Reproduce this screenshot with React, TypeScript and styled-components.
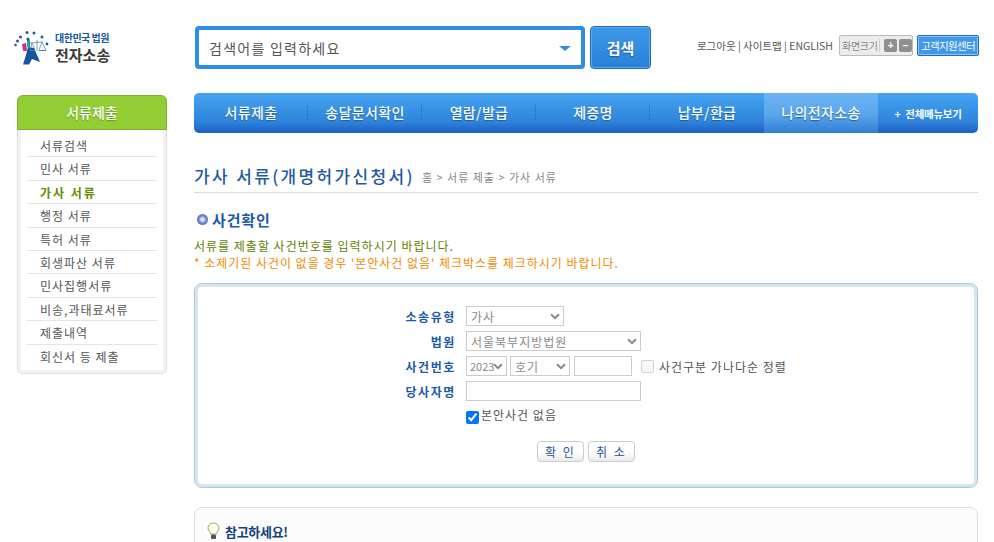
import React from "react";
import styled, { createGlobalStyle } from "styled-components";

const Global = createGlobalStyle`
  html, body { margin: 0; padding: 0; background: #fff; overflow: hidden; height: 542px; }
  body { font-family: "Noto Sans CJK KR", "Liberation Sans", sans-serif; font-size: 12px; color: #555; }
  * { box-sizing: border-box; }
`;

const chevron =
  "url(\"data:image/svg+xml,%3Csvg xmlns='http://www.w3.org/2000/svg' width='10' height='7' viewBox='0 0 10 7'%3E%3Cpath d='M1 1.2 L5 5.2 L9 1.2' fill='none' stroke='%23888' stroke-width='2'/%3E%3C/svg%3E\")";

const Page = styled.div`
  width: 994px;
  height: 542px;
  overflow: hidden;
`;
const Header = styled.header`
  height: 93px;
  display: flex;
  align-items: flex-start;
  padding: 26px 15px 0 14px;
`;
const Logo = styled.div`
  width: 181px;
  display: flex;
  align-items: center;
  gap: 4px;
  margin-top: 3px;
`;
const LogoText = styled.div`
  display: flex;
  flex-direction: column;
  gap: 2px;
`;
const LogoTop = styled.span`
  font-size: 10px;
  font-weight: 700;
  line-height: 13px;
  color: #14569f;
  letter-spacing: -0.5px;
`;
const LogoMain = styled.span`
  font-size: 15px;
  font-weight: 700;
  line-height: 18px;
  color: #3a3a3a;
  letter-spacing: 0;
`;
const SearchBox = styled.div`
  width: 390px;
  height: 43px;
  border: 4px solid #2e8ee6;
  border-radius: 4px;
  display: flex;
  align-items: center;
  justify-content: space-between;
  padding: 1px 10px 0 10px;
  font-size: 14px;
  color: #555;
  letter-spacing: 1.25px;
`;
const Caret = styled.span`
  width: 0;
  height: 0;
  border-left: 6px solid transparent;
  border-right: 6px solid transparent;
  border-top: 5px solid #2e8ee6;
`;
const SearchButton = styled.button`
  width: 61px;
  height: 43px;
  margin-left: 5px;
  border: 1px solid #1f6fc0;
  border-radius: 4px;
  background: linear-gradient(#3c98e9, #2a80d8);
  box-shadow: inset 0 0 0 1px #5aa9ee;
  color: #fff;
  font: 700 15px "Noto Sans CJK KR", sans-serif;
  text-shadow: 0 1px 1px #1a5aa0;
  padding: 0;
`;
const Util = styled.div`
  margin-left: auto;
  display: flex;
  align-items: center;
  height: 21px;
  margin-top: 9px;
`;
const UtilLinks = styled.span`
  font-size: 10.5px;
  color: #555;
  letter-spacing: 0;
  white-space: nowrap;
`;
const ZoomBox = styled.div`
  width: 74px;
  height: 21px;
  margin-left: 6px;
  border: 1px solid #bbb;
  border-radius: 2px;
  background: #ececec;
  display: flex;
  align-items: center;
  padding-left: 2px;
  gap: 2px;
  font-size: 10px;
  letter-spacing: -0.3px;
  color: #888;
`;
const ZoomLabel = styled.span`
  width: 38px;
  border-right: 1px solid #ccc;
  line-height: 13px;
  white-space: nowrap;
  margin-right: 2px;
`;
const ZoomBtn = styled.span`
  width: 13px;
  height: 13px;
  border-radius: 2px;
  background: #8f8f8f;
  color: #fff;
  font: 700 10px/13px "Liberation Sans", sans-serif;
  text-align: center;
`;
const SupportBtn = styled.a`
  width: 62px;
  height: 21px;
  margin-left: 4px;
  border: 1px solid #1c6cc0;
  border-radius: 2px;
  background: #3f98ea;
  box-shadow: inset 0 0 0 1px #8cc4f2;
  color: #fff;
  font-size: 10.5px;
  letter-spacing: -0.7px;
  line-height: 19px;
  text-align: center;
  white-space: nowrap;
`;
const Columns = styled.div`
  display: flex;
  align-items: flex-start;
  padding-left: 17px;
  gap: 27px;
`;
const Side = styled.aside`
  width: 150px;
  margin-top: 2px;
  border-radius: 6px;
  flex: none;
`;
const SideHead = styled.div`
  height: 35px;
  background: #92cd33;
  border: 1px solid #7fb02e;
  border-radius: 6px 6px 0 0;
  color: #fff;
  font-size: 14px;
  font-weight: 500;
  line-height: 32px;
  text-align: center;
  text-shadow: 0 1px 1px #6a9a20;
  letter-spacing: 0;
`;
const SideBody = styled.ul`
  list-style: none;
  margin: 0;
  height: 244px;
  padding: 4px 9px 0;
  background: #fff;
  border: 1px solid #ddd;
  border-top: 0;
  border-radius: 0 0 5px 5px;
  box-shadow: inset 3px 0 0 #f2f2f2, inset -3px 0 0 #f2f2f2, inset 0 -3px 0 #f2f2f2;
`;
const SideItem = styled.li<{ $active?: boolean }>`
  height: 23.4px;
  padding-left: 13px;
  line-height: 23px;
  border-bottom: 1px solid #e4e4e4;
  font-size: 12px;
  letter-spacing: ${(p) => (p.$active ? "2px" : "1px")};
  color: ${(p) => (p.$active ? "#5f8c00" : "#555")};
  font-weight: ${(p) => (p.$active ? 700 : 400)};
  white-space: nowrap;
  &:last-child { border-bottom: 0; }
`;
const Main = styled.main`
  width: 784px;
  flex: none;
`;
const Nav = styled.nav`
  height: 40px;
  display: flex;
  border-radius: 5px;
  overflow: hidden;
  background: linear-gradient(#46a4f4 0%, #3690e2 45%, #2f84da 72%, #1a5ec6 100%);
`;
const NavItem = styled.a<{ $active?: boolean; $sep?: boolean }>`
  width: 114px;
  flex: none;
  display: flex;
  align-items: center;
  justify-content: center;
  position: relative;
  padding-bottom: 3px;
  color: #fff;
  font-size: 14px;
  font-weight: 500;
  letter-spacing: 0.35px;
  text-shadow: 0 1px 1px #1b5fa8;
  background: ${(p) =>
    p.$active ? "linear-gradient(#6cb4f4 0%, #5ba5ea 55%, #2f7ed6 100%)" : "transparent"};
  &::after {
    content: "";
    display: ${(p) => (p.$sep ? "block" : "none")};
    position: absolute;
    right: 0;
    top: 12px;
    height: 15px;
    border-right: 1px dotted rgba(20, 80, 150, 0.6);
  }
`;
const NavMore = styled.a`
  flex: 1;
  display: flex;
  align-items: center;
  justify-content: center;
  gap: 5px;
  color: #fff;
  font-size: 10.5px;
  font-weight: 700;
  letter-spacing: -0.3px;
`;
const TitleRow = styled.div`
  margin-top: 30px;
  height: 30px;
  display: flex;
  align-items: center;
  border-bottom: 1px solid #ddd;
  padding-bottom: 4px;
`;
const Title = styled.h1`
  margin: 0;
  font-size: 17px;
  font-weight: 500;
  color: #1f5ca6;
  letter-spacing: 2.35px;
  white-space: nowrap;
`;
const Crumb = styled.span`
  margin: 3px 0 0 7px;
  font-size: 11px;
  letter-spacing: 1px;
  color: #888;
  white-space: nowrap;
`;
const Section = styled.div`
  margin-top: 15px;
  margin-left: 3px;
  display: flex;
  align-items: center;
  gap: 4px;
  height: 22px;
`;
const Bullet = styled.span`
  width: 11px;
  height: 11px;
  border-radius: 50%;
  background: radial-gradient(circle at 50% 50%, #dfe7fb 0 20%, #6c86cf 45%, #4a63ad 100%);
`;
const SectionTitle = styled.h2`
  margin: 0;
  font-size: 15px;
  font-weight: 700;
  color: #1d5aa6;
  letter-spacing: 0.85px;
`;
const Note = styled.p<{ $warn?: boolean }>`
  margin: 0;
  height: 17px;
  line-height: 17px;
  font-size: 12px;
  letter-spacing: ${(p) => (p.$warn ? "0.97px" : "1px")};
  white-space: nowrap;
  color: ${(p) => (p.$warn ? "#f28c00" : "#5f7f00")};
`;
const Notes = styled.div`
  margin-top: 7px;
`;
const FormBox = styled.form`
  margin-top: 12px;
  height: 205px;
  border: 1px solid #a9cbe0;
  border-radius: 8px;
  padding: 22px 0 0 202px;
  box-shadow: inset 0 0 0 3px #d7e5ef;
`;
const Row = styled.div`
  display: grid;
  grid-template-columns: 59px 1fr;
  column-gap: 10px;
  height: 25px;
  align-items: start;
`;
const Label = styled.label`
  font-size: 12px;
  font-weight: 700;
  color: #1d5aa6;
  text-align: right;
  line-height: 21px;
  letter-spacing: 1.6px;
  white-space: nowrap;
`;
const Fields = styled.div`
  display: flex;
  align-items: center;
  gap: 3px;
  height: 20px;
`;
const Select = styled.select<{ $w: number; $compact?: boolean }>`
  width: ${(p) => p.$w}px;
  height: 20px;
  border: 1px solid #ccc;
  background: #fff ${chevron} no-repeat right 3px center;
  appearance: none;
  color: #8a8a8a;
  font: ${(p) => (p.$compact ? "11px" : "12px")} "Noto Sans CJK KR", sans-serif;
  letter-spacing: ${(p) => (p.$compact ? "0" : "1px")};
  padding: 0 0 0 ${(p) => (p.$compact ? "3px" : "4px")};
  border-radius: 0;
`;
const Input = styled.input<{ $w: number; $gapLeft?: number }>`
  width: ${(p) => p.$w}px;
  height: 20px;
  border: 1px solid #ccc;
  padding: 0;
  margin: 0 0 0 ${(p) => p.$gapLeft ?? 0}px;
  border-radius: 0;
`;
const CheckLabel = styled.label<{ $gapLeft?: number }>`
  display: flex;
  align-items: center;
  gap: 2px;
  margin-left: ${(p) => p.$gapLeft ?? 0}px;
  font-size: 12px;
  letter-spacing: 1px;
  color: #555;
  white-space: nowrap;
`;
const Check = styled.input<{ $gapRight?: number }>`
  width: 13px;
  height: 13px;
  margin: 0 ${(p) => p.$gapRight ?? 0}px 0 0;
`;
const CheckText = styled.span`
  margin-bottom: 6px;
`;
const NoCaseRow = styled.div`
  padding-left: 69px;
  height: 20px;
  margin-top: 0;
`;
const Buttons = styled.div`
  display: flex;
  gap: 4px;
  margin: 15px 0 0 140px;
`;
const Btn = styled.button`
  width: 47px;
  height: 21px;
  padding: 0;
  border: 1px solid #ccc;
  border-radius: 4px;
  background: linear-gradient(#fff 50%, #ebebeb);
  color: #1f5a96;
  font: 12px "Noto Sans CJK KR", sans-serif;
  letter-spacing: 2px;
`;
const Tip = styled.div`
  margin-top: 19px;
  height: 60px;
  border: 1px solid #ddd;
  border-radius: 8px;
  background: #fcfcfc;
  padding: 14px 0 0 12px;
  display: flex;
  align-items: flex-start;
  gap: 5px;
`;
const TipTitle = styled.strong`
  font-size: 13px;
  font-weight: 700;
  line-height: 20px;
  color: #163f7e;
  letter-spacing: -0.3px;
`;

const menu = ["서류검색", "민사 서류", "가사 서류", "행정 서류", "특허 서류", "회생파산 서류", "민사집행서류", "비송,과태료서류", "제출내역", "회신서 등 제출"];
const navs = ["서류제출", "송달문서확인", "열람/발급", "제증명", "납부/환급", "나의전자소송"];

const LogoMark = () => (
  <svg width="37" height="37" viewBox="0 0 37 37" aria-hidden="true">
    <g fill="#1d5aa6">
      <circle cx="1.5" cy="16" r="1.3" />
      <circle cx="3.5" cy="12" r="1.5" />
      <circle cx="6.5" cy="8" r="1.5" />
      <circle cx="13" cy="3.5" r="1.5" />
      <circle cx="20" cy="4" r="1.5" />
      <circle cx="28" cy="8" r="1.5" />
      <circle cx="33" cy="15" r="1.4" />
    </g>
    <path d="M14 18 L20 19 L26 33 L18 30 L15 35.5 L9 35.5 L12 26 Z" fill="#14579f" />
    <path d="M8 15 L12 14 L13 22 L9 22 Z" fill="#d12f8f" />
    <path d="M13 11 L16 11 L16 18 L13 18 Z" fill="#2aa88f" />
    <circle cx="14" cy="10" r="1.6" fill="#14579f" />
    <path d="M16 14 L29 13 M23 11 L23 22 M18 14 L16 21 M18 14 L21 21 M28 13 L25 21 M28 13 L32 21" stroke="#3e7fae" strokeWidth="0.7" fill="none" />
    <path d="M16 21.5 H21 M25 21.5 H32" stroke="#3e7fae" strokeWidth="1.2" />
  </svg>
);

const Bulb = () => (
  <svg width="13" height="18" viewBox="0 0 13 18" aria-hidden="true">
    <path d="M6.5 1 C3 1 1 3.4 1 6 C1 8.4 3 9.6 3.6 12 H9.4 C10 9.6 12 8.4 12 6 C12 3.4 10 1 6.5 1 Z" fill="#fdfde8" stroke="#a8a860" />
    <rect x="4" y="12.5" width="5" height="4.5" rx="1" fill="#555" />
  </svg>
);

export default function App() {
  return (
    <Page>
      <Global />
      <Header>
        <Logo>
          <LogoMark />
          <LogoText>
            <LogoTop>대한민국 법원</LogoTop>
            <LogoMain>전자소송</LogoMain>
          </LogoText>
        </Logo>
        <SearchBox>
          <span>검색어를 입력하세요</span>
          <Caret />
        </SearchBox>
        <SearchButton type="button">검색</SearchButton>
        <Util>
          <UtilLinks>로그아웃 | 사이트맵 | ENGLISH</UtilLinks>
          <ZoomBox>
            <ZoomLabel>화면크기</ZoomLabel>
            <ZoomBtn>+</ZoomBtn>
            <ZoomBtn>−</ZoomBtn>
          </ZoomBox>
          <SupportBtn>고객지원센터</SupportBtn>
        </Util>
      </Header>
      <Columns>
        <Side>
          <SideHead>서류제출</SideHead>
          <SideBody>
            {menu.map((m) => (
              <SideItem key={m} $active={m === "가사 서류"}>{m}</SideItem>
            ))}
          </SideBody>
        </Side>
        <Main>
          <Nav>
            {navs.map((n, i) => (
              <NavItem key={n} $active={n === "나의전자소송"} $sep={i < 4}>{n}</NavItem>
            ))}
            <NavMore><span>+</span><span>전체메뉴보기</span></NavMore>
          </Nav>
          <TitleRow>
            <Title>가사 서류(개명허가신청서)</Title>
            <Crumb>홈 &gt; 서류 제출 &gt; 가사 서류</Crumb>
          </TitleRow>
          <Section>
            <Bullet />
            <SectionTitle>사건확인</SectionTitle>
          </Section>
          <Notes>
            <Note>서류를 제출할 사건번호를 입력하시기 바랍니다.</Note>
            <Note $warn>* 소제기된 사건이 없을 경우 '본안사건 없음' 체크박스를 체크하시기 바랍니다.</Note>
          </Notes>
          <FormBox>
            <Row>
              <Label>소송유형</Label>
              <Fields><Select $w={98} defaultValue="가사"><option>가사</option></Select></Fields>
            </Row>
            <Row>
              <Label>법원</Label>
              <Fields><Select $w={175} defaultValue="서울북부지방법원"><option>서울북부지방법원</option></Select></Fields>
            </Row>
            <Row>
              <Label>사건번호</Label>
              <Fields>
                <Select $w={41} $compact defaultValue="2023"><option>2023</option></Select>
                <Select $w={60} defaultValue="호기"><option>호기</option></Select>
                <Input $w={58} $gapLeft={1} />
                <CheckLabel $gapLeft={6}>
                  <Check type="checkbox" disabled $gapRight={3} />
                  사건구분 가나다순 정렬
                </CheckLabel>
              </Fields>
            </Row>
            <Row>
              <Label>당사자명</Label>
              <Fields><Input $w={175} /></Fields>
            </Row>
            <NoCaseRow>
              <CheckLabel>
                <Check type="checkbox" defaultChecked />
                <CheckText>본안사건 없음</CheckText>
              </CheckLabel>
            </NoCaseRow>
            <Buttons>
              <Btn type="button">확 인</Btn>
              <Btn type="button">취 소</Btn>
            </Buttons>
          </FormBox>
          <Tip>
            <Bulb />
            <TipTitle>참고하세요!</TipTitle>
          </Tip>
        </Main>
      </Columns>
    </Page>
  );
}
